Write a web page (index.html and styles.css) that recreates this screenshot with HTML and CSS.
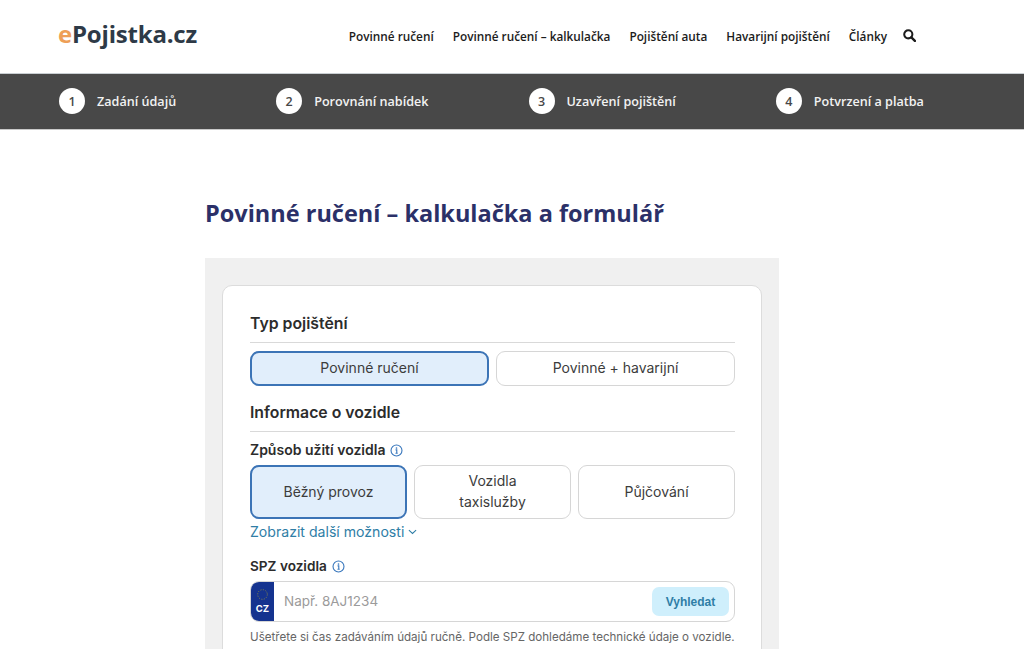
FILE: index.html
```html
<!DOCTYPE html>
<html lang="cs">
<head>
<meta charset="utf-8">
<title>Povinné ručení – kalkulačka a formulář</title>
<link rel="stylesheet" href="styles.css">
</head>
<body>
<header class="site-header">
  <a class="logo"><span class="logo-e">e</span>Pojistka.cz</a>
  <nav class="nav">
    <a>Povinné ručení</a>
    <a>Povinné ručení – kalkulačka</a>
    <a>Pojištění auta</a>
    <a>Havarijní pojištění</a>
    <a>Články</a>
    <svg class="search" viewBox="0 0 14 14" width="13" height="13"><circle cx="5.7" cy="5.7" r="4.4" fill="none" stroke="#1c1c1c" stroke-width="2.2"/><path d="M9 9L12.8 12.8" stroke="#1c1c1c" stroke-width="2.6" stroke-linecap="round"/></svg>
  </nav>
</header>
<div class="steps">
  <div class="step"><span class="num">1</span>Zadání údajů</div>
  <div class="step"><span class="num">2</span>Porovnání nabídek</div>
  <div class="step"><span class="num">3</span>Uzavření pojištění</div>
  <div class="step"><span class="num">4</span>Potvrzení a platba</div>
</div>
<main class="main">
  <h1 class="title">Povinné ručení – kalkulačka a formulář</h1>
  <section class="panel">
    <div class="card">
      <h2 class="section-head">Typ pojištění</h2>
      <div class="choices two">
        <button class="choice active">Povinné ručení</button>
        <button class="choice">Povinné + havarijní</button>
      </div>
      <h2 class="section-head second">Informace o vozidle</h2>
      <div class="label">Způsob užití vozidla
        <svg class="info" viewBox="0 0 14 14" width="13" height="13"><circle cx="7" cy="7" r="5.9" fill="none" stroke="#3a78bd" stroke-width="1.2"/><circle cx="7" cy="4.3" r=".9" fill="#3a78bd"/><path d="M6 6.3h1.3v3.6M5.9 10h2.4" fill="none" stroke="#3a78bd" stroke-width="1.2"/></svg>
      </div>
      <div class="choices three">
        <button class="choice tall active">Běžný provoz</button>
        <button class="choice tall">Vozidla<br>taxislužby</button>
        <button class="choice tall">Půjčování</button>
      </div>
      <a class="more">Zobrazit další možnosti
        <svg viewBox="0 0 10 6" width="9" height="6"><path d="M1 1l4 3.6L9 1" fill="none" stroke="#2f7ea6" stroke-width="1.2"/></svg>
      </a>
      <div class="label spz">SPZ vozidla
        <svg class="info" viewBox="0 0 14 14" width="13" height="13"><circle cx="7" cy="7" r="5.9" fill="none" stroke="#3a78bd" stroke-width="1.2"/><circle cx="7" cy="4.3" r=".9" fill="#3a78bd"/><path d="M6 6.3h1.3v3.6M5.9 10h2.4" fill="none" stroke="#3a78bd" stroke-width="1.2"/></svg>
      </div>
      <div class="plate">
        <div class="plate-flag">
          <svg viewBox="0 0 14 14" width="13" height="13"><circle cx="7" cy="7" r="5.2" fill="none" stroke="#8f8a45" stroke-width="1" stroke-dasharray="1.1 1.6"/></svg>
          <span>CZ</span>
        </div>
        <span class="plate-input">Např. 8AJ1234</span>
        <button class="lookup">Vyhledat</button>
      </div>
      <p class="hint">Ušetřete si čas zadáváním údajů ručně. Podle SPZ dohledáme technické údaje o vozidle.</p>
    </div>
  </section>
</main>
</body>
</html>
```
FILE: styles.css
```css
* { box-sizing: border-box; }
html, body { margin: 0; height: 649px; overflow: hidden; background: #fff; }
body { font-family: "Open Sans", sans-serif; color: #222; }

.site-header {
  height: 73px;
  display: flex;
  align-items: center;
  justify-content: space-between;
  padding: 0 108px 2px 58px;
}
.logo { font-size: 24px; font-weight: 700; color: #2e3a47; letter-spacing: -.2px; margin-top: -5px; }
.logo-e { color: #ee9f57; }
.nav { display: flex; align-items: center; gap: 19px; font-size: 11.8px; font-weight: 600; color: #1c1c1c; }
.search { margin-left: -3px; }

.steps {
  height: 57px;
  background: #484848;
  border-top: 1px solid #c9ced2;
  border-bottom: 1px solid #c9c9c9;
  display: flex;
  align-items: center;
  gap: 100px;
  padding: 0 0 1px 59px;
  color: #f2f2f2;
  font-size: 12.6px;
  font-weight: 600;
}
.step { display: flex; align-items: center; gap: 12px; white-space: nowrap; }
.num {
  width: 26px; height: 26px; border-radius: 50%;
  background: #fff; color: #484848;
  display: flex; align-items: center; justify-content: center;
  font-size: 12.5px;
}

.main { width: 574px; margin: 0 0 0 205px; }
.title {
  margin: 0; padding-top: 67px; height: 128px;
  font-size: 23.5px; line-height: 33px; font-weight: 700; color: #2b3068;
  white-space: nowrap;
}
.panel { background: #f0f0f0; padding: 27px 17px 0; height: 400px; }
.card {
  background: #fff;
  border: 1px solid #dcdcdc;
  border-radius: 10px;
  padding: 28px 27px 0;
  height: 380px;
  font-family: Inter, sans-serif;
}
.section-head {
  margin: 0; font-size: 15.8px; line-height: 20px; font-weight: 600; color: #2c2c2c;
  padding-bottom: 8px; border-bottom: 1px solid #d9d9d9;
  width: 485px;
}
.section-head.second { margin-top: 17px; }
.choices { display: grid; gap: 7px; width: 485px; margin-top: 8px; }
.choices.two { grid-template-columns: 239px 239px; }
.choices.three { grid-template-columns: repeat(3, 157px); margin-top: 6px; }
.choice {
  height: 35px;
  background: #fff;
  border: 1px solid #d6d6d6;
  border-radius: 9px;
  font: 400 14px/21px Inter, sans-serif;
  color: #3c3c3c;
  padding: 0 0 2px;
}
.choice.active { background: #e1eefb; border: 2px solid #3c74b6; }
.choice.tall { height: 54px; }
.label { margin-top: 9px; font-size: 14px; line-height: 18px; font-weight: 600; color: #2c2c2c; display: flex; align-items: center; gap: 5px; }
.label.spz { margin-top: 16px; font-size: 13.6px; }
.more { display: flex; align-items: center; gap: 4px; margin-top: 3px; font-size: 14.1px; line-height: 19px; color: #2f7ea6; }
.plate {
  margin-top: 6px; width: 485px; height: 41px;
  border: 1px solid #d6d6d6; border-radius: 9px;
  display: flex; align-items: center; overflow: hidden;
}
.plate-flag {
  width: 23px; height: 39px; background: #15338f; color: #fff;
  display: flex; flex-direction: column; align-items: center; justify-content: center;
  font-size: 9.5px; font-weight: 700; line-height: 12px; gap: 2px;
  flex: none;
}
.plate-input { margin-left: 10px; margin-bottom: 2px; flex: 1; font-size: 13.5px; color: #9b9b9b; }
.lookup {
  width: 77px; height: 29px; margin-right: 5px;
  background: #cfeffc; border: 0; border-radius: 7px;
  font: 700 12px "Liberation Sans", sans-serif; color: #2f7ea6;
}
.hint { margin: 7px 0 0; font-size: 11.6px; line-height: 16px; color: #666; white-space: nowrap; }
```
